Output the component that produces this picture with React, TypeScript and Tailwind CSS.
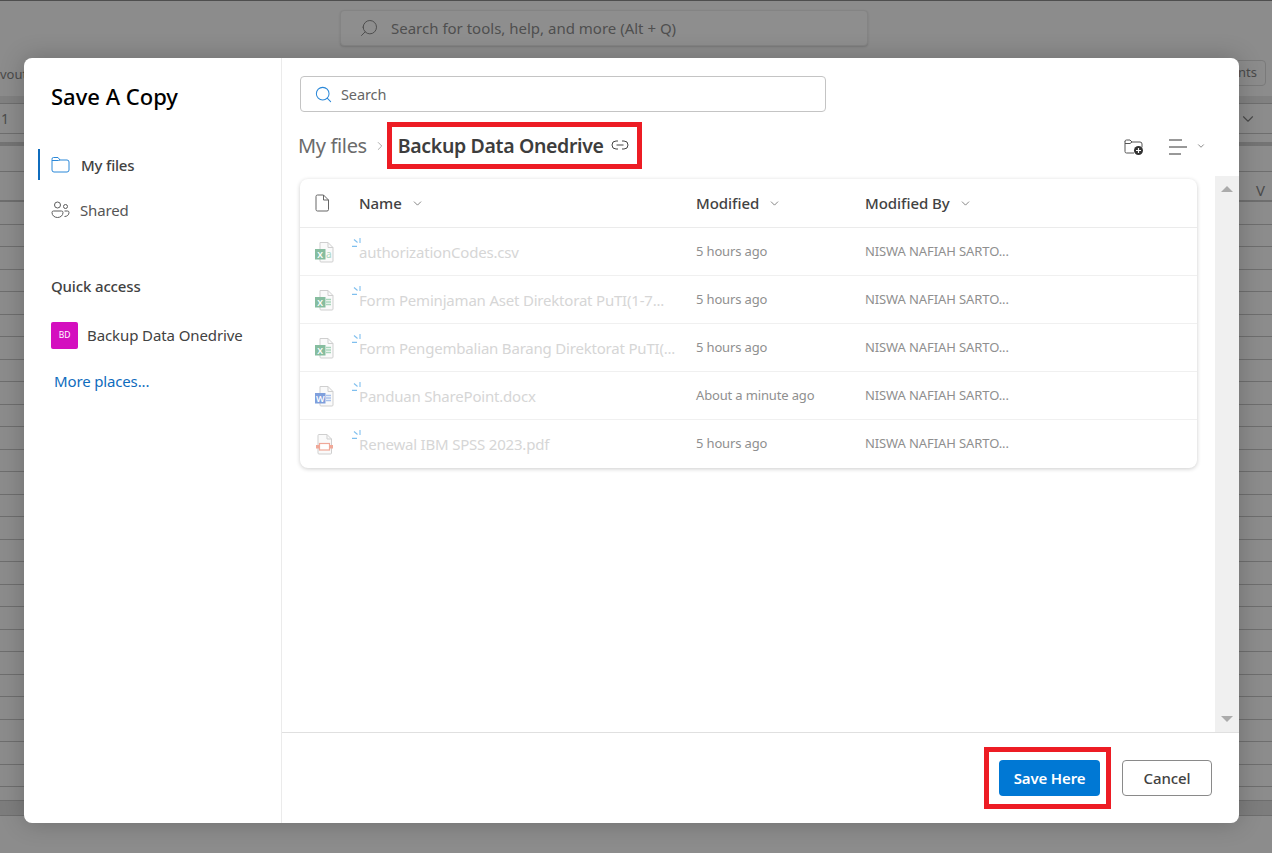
import React from 'react';
import { ChevronDown, ChevronRight, Search } from 'lucide-react';

const FONT = "font-['Noto_Sans','Open_Sans',sans-serif]";

type FileRow = {
  name: string;
  kind: 'csv' | 'xlsx' | 'docx' | 'pdf';
  modified: string;
};

const files: FileRow[] = [
  { name: 'authorizationCodes.csv', kind: 'csv', modified: '5 hours ago' },
  { name: 'Form Peminjaman Aset Direktorat PuTI(1-7...', kind: 'xlsx', modified: '5 hours ago' },
  { name: 'Form Pengembalian Barang Direktorat PuTI(...', kind: 'xlsx', modified: '5 hours ago' },
  { name: 'Panduan SharePoint.docx', kind: 'docx', modified: 'About a minute ago' },
  { name: 'Renewal IBM SPSS 2023.pdf', kind: 'pdf', modified: '5 hours ago' },
];

const sheetRows = Array.from({ length: 26 }, (_, i) => i);

const FileIcon = ({ kind }: { kind: FileRow['kind'] }) => {
  if (kind === 'pdf') {
    return (
      <svg width="20" height="22" viewBox="0 0 20 22" fill="none">
        <path d="M4 1.500h8l4.500 4.500v14a1 1 0 0 1-1 1H4a1 1 0 0 1-1-1v-17.500a1 1 0 0 1 1-1z" fill="#fafafa" stroke="#cfcfcf" />
        <path d="M12 1.500v4.500h4.500" stroke="#cfcfcf" />
        <rect x="1" y="12" width="3" height="3.500" fill="#f0a898" />
        <rect x="15" y="12" width="3" height="3.500" fill="#f0a898" />
        <rect x="4.500" y="10.500" width="10" height="6.500" fill="#fff" stroke="#f0a898" strokeWidth="1.200" />
      </svg>
    );
  }
  const word = kind === 'docx';
  const tile = word ? '#7f9fdc' : '#86bd9f';
  const lines = word ? '#a9c1ec' : '#a8d6bc';
  return (
    <svg width="20" height="22" viewBox="0 0 20 22" fill="none">
      <path d="M5 1.500h8l5 5v13.500a1 1 0 0 1-1 1H6a1 1 0 0 1-1-1z" fill="#fafafa" stroke="#cfcfcf" />
      <path d="M13 1.500v5h5" stroke="#cfcfcf" />
      {kind === 'csv' ? (
        <text x="11" y="17" fontSize="10" fill={lines} fontFamily="Noto Sans, sans-serif">a</text>
      ) : (
        <path d="M11 10.500h5M11 13h5M11 15.500h5" stroke={lines} strokeWidth="1.300" />
      )}
      <rect x="0" y="8" width="10.500" height="10.500" fill={tile} />
      <text x="5.200" y="16.500" textAnchor="middle" fontSize="9" fontWeight="600" fill="#fff" fontFamily="Noto Sans, sans-serif">
        {word ? 'W' : 'X'}
      </text>
    </svg>
  );
};

const SyncTicks = () => (
  <svg width="9" height="9" viewBox="0 0 9 9" fill="none" className="absolute left-0 top-0" stroke="#7fbfee" strokeWidth="1.100">
    <path d="M0 8.400h5" />
    <path d="M2 1.500l3.500 3" />
    <path d="M8 0v5" />
  </svg>
);

const SpreadsheetBackdrop = () => (
  <div className="flex h-full flex-col border-t border-[#4e4e4e] text-[#4a4a4a]">
    <div className="flex h-[57px] shrink-0 pl-[340px] pt-[9px]">
      <div className="flex h-[36px] w-[528px] items-center gap-[12px] rounded-[4px] border border-[#848484] bg-[#8e8e8e] pl-[18px] text-[15px] text-[#4f4f4f] shadow-[0_1px_2px_rgba(0,0,0,0.15)]">
        <Search size={20} strokeWidth={1.200} className="-scale-x-100" />
        <span>Search for tools, help, and more (Alt + Q)</span>
      </div>
    </div>
    <div className="flex h-[38px] shrink-0 items-start justify-between pr-[6px] text-[13px]">
      <span className="mt-[7px]">vout</span>
      <div className="mt-[2px] flex h-[26px] items-center rounded-[4px] border border-[#7a7a7a] px-[8px] text-[13px]">Comments</div>
    </div>
    <div className="h-[7px] shrink-0 bg-[#818181]" />
    <div className="flex h-[31px] shrink-0 items-center justify-between border-y border-[#6e6e6e] pr-[15px] text-[14px]">
      <span className="pl-[1px]">1</span>
      <ChevronDown size={18} strokeWidth={1.500} />
    </div>
    <div className="h-[12px] shrink-0 border-b-4 border-[#747474]" />
    <div className="h-[26px] shrink-0 border-b border-[#6e6e6e]" />
    <div className="flex h-[30px] shrink-0 items-center justify-end border-b-2 border-[#6e6e6e] pt-[9px] pr-[7px] text-[15px]">V</div>
    {sheetRows.map(row => (
      <div key={row} className="h-[22.500px] shrink-0 border-b border-[#6e6e6e]" />
    ))}
    <div className="h-[14px] shrink-0 border-b border-[#6e6e6e]" />
    <div className="h-[15px] shrink-0 border-b border-[#6e6e6e] bg-[#7d7d7d]" />
  </div>
);

const Sidebar = () => (
  <aside className="flex w-[258px] shrink-0 flex-col border-r border-[#ebebeb] pl-[27px]">
    <h1 className="mt-[23px] h-[30px] text-[22px] leading-[30px] font-medium text-black">Save A Copy</h1>
    <nav className="mt-[38px] -ml-[13px] flex flex-col text-[#424242]">
      <div className="flex h-[31px] items-center border-l-2 border-[#0f6cbd] pl-[11px]">
        <svg width="19" height="17" viewBox="0 0 19 17" fill="none" stroke="#2b88d8" strokeWidth="1">
          <path d="M1 3.500V14a2 2 0 0 0 2 2h13a2 2 0 0 0 2-2V6a2 2 0 0 0-2-2H9L7 1.500H2.500A1.500 1.500 0 0 0 1 3z" />
          <path d="M1 4.500h6.500L9 4" />
        </svg>
        <span className="mt-[1px] ml-[11px] text-[15px] font-medium tracking-[-0.200px]">My files</span>
      </div>
      <div className="mt-[14px] flex h-[31px] items-center pl-[13px]">
        <svg width="19" height="18" viewBox="0 0 19 18" fill="none" stroke="#5c5c5c" strokeWidth="1">
          <circle cx="6.500" cy="4" r="3" />
          <circle cx="14.500" cy="5.500" r="2" />
          <path d="M1 11.500a1.500 1.500 0 0 1 1.500-1.500h8a1.500 1.500 0 0 1 1.500 1.500c0 3-2.500 5-5.500 5S1 14.500 1 11.500z" />
          <path d="M13.500 10h3a1.500 1.500 0 0 1 1.500 1.500c0 2.500-2 4-4.500 4" />
        </svg>
        <span className="mt-[1px] ml-[10px] text-[15px] tracking-[-0.150px] text-[#555]">Shared</span>
      </div>
    </nav>
    <h2 className="mt-[51px] text-[15px] leading-[20px] font-medium tracking-[-0.150px] text-[#424242]">Quick access</h2>
    <div className="mt-[26px] flex items-center">
      <div className="flex h-[27px] w-[27px] items-center justify-center rounded-[2px] bg-[#d40fbf] text-[8.500px] text-white">BD</div>
      <span className="ml-[9px] text-[15px] tracking-[-0.100px] text-[#424242]">Backup Data Onedrive</span>
    </div>
    <a className="mt-[22px] ml-[3px] text-[15px] leading-[20px] tracking-[-0.150px] text-[#0f6cbd]">More places...</a>
  </aside>
);

const Breadcrumb = () => (
  <div className="mt-[10px] flex h-[47px] items-center">
    <span className="-ml-[2px] text-[20px] tracking-[-0.350px] text-[#6b6b6b]">My files</span>
    <ChevronRight size={14} strokeWidth={1.200} className="ml-[6px] text-[#8a8a8a]" />
    <div className="flex h-[47px] w-[255px] items-center border-[5px] border-[#ed1c24] pl-[6px]">
      <span className="text-[19.500px] font-semibold tracking-[-0.350px] whitespace-nowrap text-[#3d3d3d]">Backup Data Onedrive</span>
      <svg width="18" height="10" viewBox="0 0 18 10" fill="none" stroke="#444" strokeWidth="1" className="ml-[7px] -mt-[2px] shrink-0">
        <path d="M7 1H5a4 4 0 0 0 0 8h2M11 1h2a4 4 0 0 1 0 8h-2M5.500 5h7" />
      </svg>
    </div>
    <div className="ml-auto flex items-center pr-[33px]">
      <svg width="20" height="18" viewBox="0 0 20 18" fill="none" className="mt-[3px]">
        <path d="M1 3v10.500a1.500 1.500 0 0 0 1.500 1.500H10M1 3.500A1.500 1.500 0 0 1 2.500 2h3.500L8 4h8a2 2 0 0 1 2 2v3M1 5.500h5L8 4" stroke="#555" strokeWidth="1" />
        <circle cx="14.500" cy="12.500" r="4.500" fill="#333" />
        <path d="M14.500 10v5M12 12.500h5" stroke="#fff" strokeWidth="1.200" />
      </svg>
      <svg width="18" height="16" viewBox="0 0 18 16" fill="none" stroke="#333" strokeWidth="1" className="mt-[3px] ml-[25px]">
        <path d="M0 1h13M0 8h18M0 15h12" />
      </svg>
      <ChevronDown size={10} strokeWidth={1.500} className="ml-[9px] text-[#444]" />
    </div>
  </div>
);

const FileTable = () => (
  <div className="w-full overflow-hidden rounded-[8px] bg-white shadow-[0_1px_4px_rgba(0,0,0,0.2)]">
    <div className="flex h-[49px] items-center border-b border-[#ebebeb] text-[15px] font-medium tracking-[-0.050px] text-[#424242]">
      <div className="w-[59px] shrink-0 pl-[15px]">
        <svg width="15" height="18" viewBox="0 0 15 18" fill="none" stroke="#666" strokeWidth="1">
          <path d="M2.500 1h6l5 5v9.500a1.500 1.500 0 0 1-1.500 1.500H2.500A1.500 1.500 0 0 1 1 15.500v-13A1.500 1.500 0 0 1 2.500 1z" />
          <path d="M8.500 1v5h5" />
        </svg>
      </div>
      <div className="flex w-[337px] shrink-0 items-center gap-[9px]">
        Name <ChevronDown size={13} strokeWidth={1.300} className="text-[#555]" />
      </div>
      <div className="flex w-[169px] shrink-0 items-center gap-[9px]">
        Modified <ChevronDown size={13} strokeWidth={1.300} className="text-[#555]" />
      </div>
      <div className="flex items-center gap-[9px]">
        Modified By <ChevronDown size={13} strokeWidth={1.300} className="text-[#555]" />
      </div>
    </div>
    {files.map((file, i) => (
      <div key={file.name} className={`flex h-[48px] items-center ${i < files.length - 1 ? 'border-b border-[#f0f0f0]' : ''}`}>
        <div className="w-[59px] shrink-0 pl-[15px]">
          <FileIcon kind={file.kind} />
        </div>
        <div className="relative -ml-[7px] flex h-full w-[344px] shrink-0 items-center pl-[7px]">
          <div className="absolute top-[10px] left-0 h-[9px] w-[9px]">
            <SyncTicks />
          </div>
          <span className="mt-[1px] text-[15px] tracking-[-0.200px] whitespace-nowrap text-[#d6d6d6]">{file.name}</span>
        </div>
        <div className="w-[169px] shrink-0 text-[13px] tracking-[-0.150px] text-[#8f8f8f]">{file.modified}</div>
        <div className="text-[13px] tracking-[-0.100px] text-[#8f8f8f]">NISWA NAFIAH SARTO...</div>
      </div>
    ))}
  </div>
);

const App: React.FC = () => {
  return (
    <div className={`relative h-[853px] w-[1272px] overflow-hidden bg-[#8c8c8c] ${FONT}`}>
      <SpreadsheetBackdrop />

      <div className="absolute top-[58px] left-[24px] flex h-[765px] w-[1215px] overflow-hidden rounded-[8px] bg-white shadow-[0_0_24px_rgba(0,0,0,0.22)]">
        <Sidebar />

        <main className="flex min-w-0 flex-1 flex-col">
          <div className="h-[118px] shrink-0 pl-[18px]">
            <div className="mt-[18px] flex h-[36px] w-[526px] items-center rounded-[4px] border border-[#c4c4c4] pl-[13px]">
              <Search size={19} strokeWidth={1.300} className="text-[#2b88d8]" />
              <span className="mt-[1px] ml-[8px] text-[14.500px] tracking-[-0.100px] text-[#666]">Search</span>
            </div>
            <Breadcrumb />
          </div>

          <div className="flex min-h-0 flex-1">
            <div className="min-w-0 flex-1 pt-[3px] pr-[18px] pl-[18px]">
              <FileTable />
            </div>
            <div className="flex w-[24px] shrink-0 flex-col items-center justify-between bg-[#f0f0f0] py-[10px]">
              <div className="h-0 w-0 border-x-[6px] border-b-[6px] border-x-transparent border-b-[#ababab]" />
              <div className="h-0 w-0 border-x-[6px] border-t-[6px] border-x-transparent border-t-[#ababab]" />
            </div>
          </div>

          <footer className="flex h-[91px] shrink-0 items-center justify-end border-t border-[#e0e0e0] pr-[27px]">
            <div className="flex h-[62px] w-[127px] items-center border-[5px] border-[#ed1c24] pl-[10px]">
              <button className="h-[36px] w-[101px] rounded-[4px] bg-[#0078d4] text-[15px] font-semibold tracking-[-0.150px] text-white">Save Here</button>
            </div>
            <button className="ml-[11px] h-[36px] w-[90px] rounded-[4px] border border-[#8a8a8a] bg-white text-[15px] font-medium tracking-[-0.100px] text-[#424242]">Cancel</button>
          </footer>
        </main>
      </div>
    </div>
  );
};

export default App;
